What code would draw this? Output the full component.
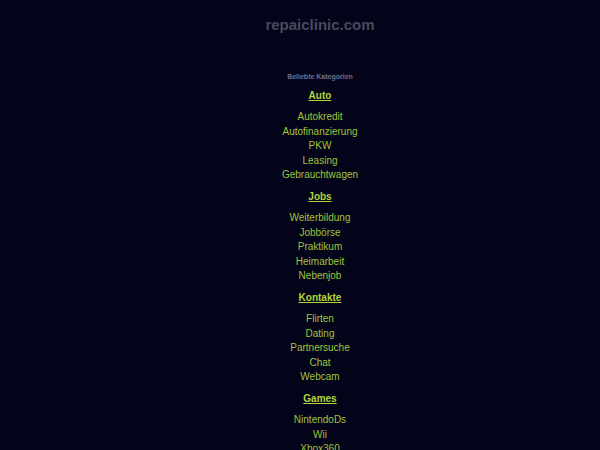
import React from "react";

const groups = [
  { title: "Auto", items: ["Autokredit", "Autofinanzierung", "PKW", "Leasing", "Gebrauchtwagen"] },
  { title: "Jobs", items: ["Weiterbildung", "Jobbörse", "Praktikum", "Heimarbeit", "Nebenjob"] },
  { title: "Kontakte", items: ["Flirten", "Dating", "Partnersuche", "Chat", "Webcam"] },
  { title: "Games", items: ["NintendoDs", "Wii", "Xbox360", "PS3", "Playstation"] },
];

export default function App() {
  return (
    <div className="w-[600px] h-[450px] overflow-hidden bg-[#03031a] pl-[40px] text-center font-['Liberation_Sans',Arial,sans-serif]">
      <h1 className="pt-[16px] text-[15px] leading-[18px] font-bold text-[#4a4a5c]">repaiclinic.com</h1>

      <div className="mt-[38px] text-[7px] leading-[10px] font-bold text-[#70708a]">Beliebte Kategorien</div>

      <div className="mt-[6.75px]">
        {groups.map((g) => (
          <div key={g.title}>
            <a href="#" className="block text-[10px] leading-[14.5px] font-bold underline text-[#b2d63a]">
              {g.title}
            </a>
            <ul className="mt-[7px] mb-[7px]">
              {g.items.map((item) => (
                <li key={item} className="text-[10px] leading-[14.5px] text-[#a2c43a]">
                  <a href="#">{item}</a>
                </li>
              ))}
            </ul>
          </div>
        ))}
      </div>
    </div>
  );
}
